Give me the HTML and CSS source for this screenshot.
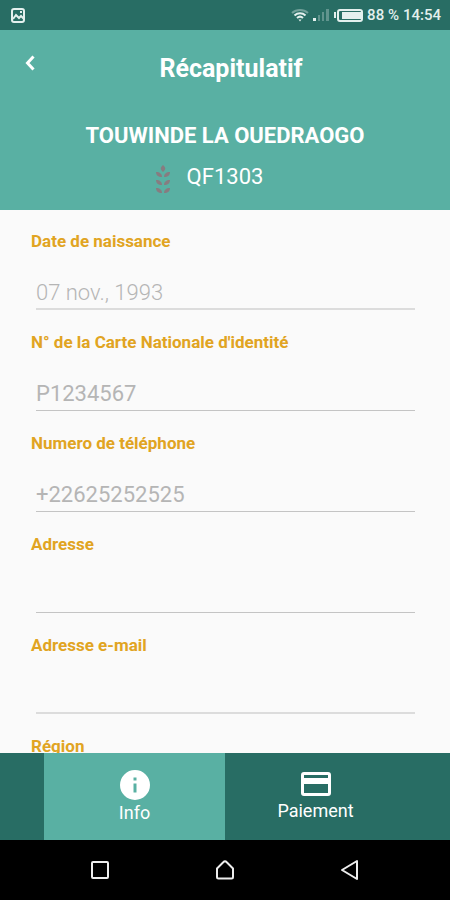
FILE: index.html
```html
<!DOCTYPE html>
<html lang="fr">
<head>
<meta charset="utf-8">
<meta name="viewport" content="width=device-width, initial-scale=1">
<title>Récapitulatif</title>
<link rel="stylesheet" href="styles.css">
</head>
<body>
<div class="status">
  <svg class="status-picture" width="16" height="16" viewBox="0 0 16 16" fill="none" stroke="currentColor" stroke-width="2" aria-hidden="true">
    <rect x="2" y="2" width="12" height="13" rx="2"/>
    <path d="M3 12l3-4 3 3 2-2 3 3" />
    <path d="M10 5h2" />
  </svg>
  <div class="status-right">
    <svg width="18" height="14" viewBox="0 0 18 14" fill="none" stroke="currentColor" stroke-width="2" aria-hidden="true">
      <path d="M1 5a12 12 0 0 1 16 0" opacity=".4"/>
      <path d="M3.500 7.500a8 8 0 0 1 11 0"/>
      <path d="M6 10a4.500 4.500 0 0 1 6 0"/>
      <path d="M7.500 11.500h3L9 13.500z" fill="currentColor" stroke="none"/>
    </svg>
    <svg width="17" height="14" viewBox="0 0 17 14" fill="currentColor" aria-hidden="true">
      <rect x="0" y="10" width="3" height="3"/>
      <g opacity=".3"><rect x="5" y="7" width="2" height="6"/><rect x="9" y="4" width="2" height="9"/><rect x="13" y="1" width="3" height="12"/></g>
    </svg>
    <svg class="battery" width="29" height="14" viewBox="0 0 29 14" aria-hidden="true">
      <rect x="0" y="4" width="2" height="6" fill="currentColor"/>
      <rect x="4" y="2" width="24" height="11" rx="2" fill="none" stroke="currentColor" stroke-width="2"/>
      <rect x="8" y="4" width="19" height="7" fill="currentColor"/>
    </svg>
    <span class="charge">88 %</span>
    <time>14:54</time>
  </div>
</div>

<header class="header">
  <div class="title-bar">
    <button class="back" type="button" aria-label="Retour">
      <svg width="10" height="16" viewBox="0 0 10 16" fill="none" stroke="currentColor" stroke-width="3" aria-hidden="true"><path d="M8.500 1.500L2.500 8l6 6.500"/></svg>
    </button>
    <h1>Récapitulatif</h1>
  </div>
  <h2>TOUWINDE LA OUEDRAOGO</h2>
  <p class="code">
    <svg width="16" height="30" viewBox="0 0 16 30" fill="currentColor" aria-hidden="true">
      <path d="M8 1c3 3 3 4 0 7-3-3-3-4 0-7z"/>
      <path d="M1 8c4 0 6 2 6 5-4 0-6-2-6-5zM15 8c-4 0-6 2-6 5 4 0 6-2 6-5z"/>
      <path d="M1 16c4 0 6 2 6 5-4 0-6-2-6-5zM15 16c-4 0-6 2-6 5 4 0 6-2 6-5z"/>
      <path d="M1 24c4 0 6 2 6 5-4 0-6-2-6-5zM15 24c-4 0-6 2-6 5 4 0 6-2 6-5z"/>
    </svg>
    <span>QF1303</span>
  </p>
</header>

<main class="form">
  <div class="field">
    <label for="birth">Date de naissance</label>
    <input class="light heavy-line" id="birth" type="text" value="07 nov., 1993">
  </div>
  <div class="field">
    <label for="card">N° de la Carte Nationale d'identité</label>
    <input id="card" type="text" value="P1234567">
  </div>
  <div class="field">
    <label for="phone">Numero de téléphone</label>
    <input id="phone" type="tel" value="+22625252525">
  </div>
  <div class="field">
    <label for="address">Adresse</label>
    <input id="address" type="text">
  </div>
  <div class="field">
    <label for="email">Adresse e-mail</label>
    <input class="heavy-line" id="email" type="email">
  </div>
  <div class="field">
    <label for="region">Région</label>
    <input id="region" type="text">
  </div>
</main>

<nav class="tabs">
  <button class="tab active" type="button">
    <svg width="36" height="36" viewBox="0 0 24 24" fill="currentColor" aria-hidden="true"><path d="M12 2a10 10 0 1 0 0 20 10 10 0 0 0 0-20zm1 15h-2v-6h2zm0-8h-2V7h2z"/></svg>
    <span>Info</span>
  </button>
  <button class="tab" type="button">
    <svg width="36" height="36" viewBox="0 0 24 24" fill="currentColor" aria-hidden="true"><path d="M20 4H4a2 2 0 0 0-2 2v12a2 2 0 0 0 2 2h16a2 2 0 0 0 2-2V6a2 2 0 0 0-2-2zm0 14H4v-6h16zm0-10H4V6h16z"/></svg>
    <span>Paiement</span>
  </button>
</nav>

<div class="system">
  <button type="button" aria-label="Applications récentes"><svg width="22" height="22" viewBox="0 0 22 22"><rect x="3" y="3" width="16" height="16" rx="1"/></svg></button>
  <button type="button" aria-label="Accueil"><svg width="22" height="22" viewBox="0 0 22 22"><path d="M3 9.500L9.500 3a2 2 0 0 1 3 0L19 9.500V18a1.500 1.500 0 0 1-1.500 1.500h-13A1.500 1.500 0 0 1 3 18z"/></svg></button>
  <button type="button" aria-label="Précédent"><svg width="22" height="22" viewBox="0 0 22 22"><path d="M18 2v18L3 11z"/></svg></button>
</div>
</body>
</html>
```
FILE: styles.css
```css
* { box-sizing: border-box; }

body {
  margin: 0;
  height: 100vh;
  display: flex;
  flex-direction: column;
  overflow: hidden;
  background: #fafafa;
  color: #fff;
  font-family: Roboto, "Liberation Sans", sans-serif;
}

h1, h2, p { margin: 0; }

button {
  padding: 0;
  border: 0;
  background: none;
  color: inherit;
  font: inherit;
}

svg { display: block; }

.status {
  display: flex;
  align-items: center;
  justify-content: space-between;
  height: 30px;
  padding: 0 9px 0 10px;
  background: #286d64;
  color: #e4f0ee;
  font-size: 15px;
  font-weight: 500;
}

.status-right {
  display: flex;
  align-items: center;
  gap: 4px;
}

.header {
  height: 180px;
  background: #59b0a3;
  text-align: center;
}

.title-bar {
  display: grid;
  grid-template-columns: 60px 1fr 48px;
  height: 78px;
}

.back {
  display: flex;
  align-items: center;
  justify-content: center;
  height: 66px;
}

h1 {
  font-size: 25px;
  line-height: 78px;
}

h2 {
  font-size: 22px;
  line-height: 56px;
}

.code {
  display: flex;
  justify-content: center;
  align-items: flex-start;
  gap: 16px;
  padding-right: 32px;
  font-size: 22px;
  line-height: 26px;
}

.code svg { color: #877c80; }

.form {
  flex: 1;
  min-height: 0;
  overflow: hidden;
  padding: 19px 30px 0 31px;
}

.field { height: 101px; }

.field label {
  display: block;
  color: #e1a422;
  font-size: 17px;
  font-weight: 700;
  line-height: 24px;
}

.field input {
  display: block;
  width: calc(100% - 10px);
  height: 46px;
  margin: 11px 5px 0;
  padding: 12px 0 0;
  border: 0;
  border-bottom: 1px solid #c4c4c4;
  border-radius: 0;
  outline: 0;
  background: none;
  color: #b5b5b5;
  font: 400 22px Roboto, "Liberation Sans", sans-serif;
}

.field .light { font-weight: 300; }

.field .heavy-line { border-bottom: 2px solid #dcdcdc; }

.tabs {
  display: flex;
  height: 87px;
  padding-left: 44px;
  background: #286d64;
}

.tab {
  display: flex;
  flex-direction: column;
  align-items: center;
  width: 181px;
  padding-top: 13px;
  font-size: 18px;
  line-height: 18px;
}

.tab.active {
  padding-top: 14px;
  background: #59b0a3;
  line-height: 20px;
}

.system {
  display: flex;
  justify-content: center;
  gap: 103px;
  height: 60px;
  background: #000;
}

.system svg {
  fill: none;
  stroke: #eee;
  stroke-width: 2;
  stroke-linejoin: round;
}
```
